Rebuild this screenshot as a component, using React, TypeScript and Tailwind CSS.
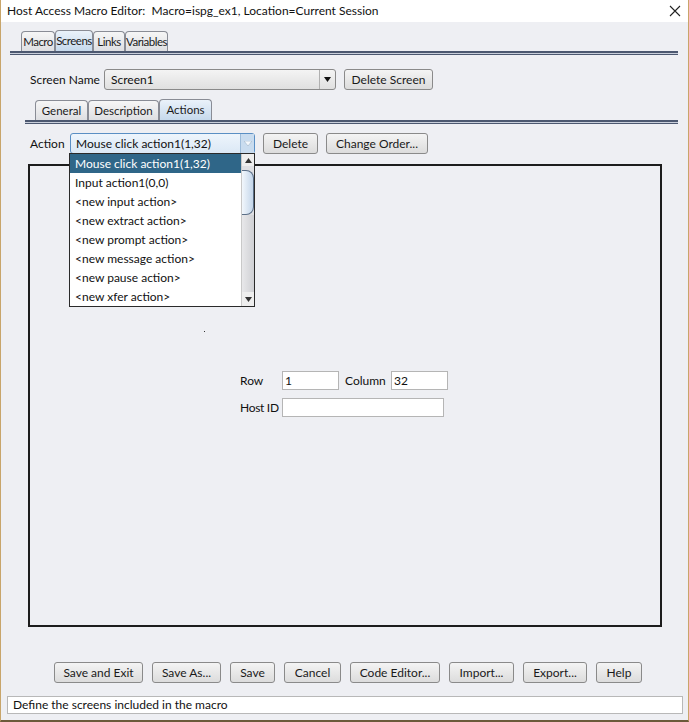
import React from 'react';

const font = { fontFamily: 'Lato, "Noto Sans", sans-serif' };

const Tab: React.FC<{ label: string; active?: boolean; w: number; small?: boolean }> = ({ label, active, w, small }) => (
  <div
    style={{ width: w }}
    className={`flex shrink-0 items-center justify-center whitespace-nowrap rounded-t-[4px] border border-b-0 border-[#898c95] text-[#1a1a1a] ${
      small ? 'text-[11.5px] tracking-[-0.5px]' : 'text-[11.5px]'
    } ${
      active
        ? 'h-[21px] bg-gradient-to-b from-[#eaf2fa] to-[#c6d9ec]'
        : 'h-[20px] bg-gradient-to-b from-[#f6f6f6] to-[#dedfe2]'
    }`}
  >
    {label}
  </div>
);

const Btn: React.FC<{ label: string; w: number }> = ({ label, w }) => (
  <div
    style={{ width: w }}
    className="flex h-[21px] shrink-0 items-center justify-center whitespace-nowrap rounded-[3px] border border-[#8a8a8a] bg-gradient-to-b from-[#f4f4f4] to-[#dcdcdc] text-[12px] text-[#1a1a1a]"
  >
    {label}
  </div>
);

const DoubleLine: React.FC = () => (
  <div className="h-[4px] border-t-2 border-b border-[#4c5870] bg-[#c9cfdb]" />
);

const items = [
  'Input action1(0,0)',
  '<new input action>',
  '<new extract action>',
  '<new prompt action>',
  '<new message action>',
  '<new pause action>',
  '<new xfer action>',
];

export default function App() {
  return (
    <div
      style={font}
      className="relative flex h-[722px] w-[689px] flex-col whitespace-nowrap border-x border-b-2 border-x-[#c8a56a] border-b-[#6b5a3a] bg-[#eeeff3] text-[#111]"
    >
      {/* title bar */}
      <div className="flex h-[22px] items-center justify-between bg-white pl-[6px] pr-[6px] text-[12px]">
        <span>Host Access Macro Editor:&nbsp; Macro=ispg_ex1, Location=Current Session</span>
        <svg width="12" height="12" viewBox="0 0 12 12" className="mr-[1px]">
          <path d="M1 1 L11 11 M11 1 L1 11" stroke="#222" strokeWidth="1.1" />
        </svg>
      </div>

      {/* top tabs */}
      <div className="pl-[9px] pr-[10px] pt-[8px]">
        <div className="flex items-end pl-[11px]">
          <Tab label="Macro" w={34} small />
          <Tab label="Screens" w={38} active small />
          <Tab label="Links" w={32} small />
          <Tab label="Variables" w={43} small />
        </div>
        <DoubleLine />
      </div>

      {/* screen name row */}
      <div className="mt-[14px] flex items-center pl-[29px] text-[12px]">
        <span className="w-[74px] shrink-0">Screen Name</span>
        <div className="flex h-[21px] w-[232px] shrink-0 items-center rounded-[3px] border border-[#8a8a8a] bg-gradient-to-b from-[#f4f4f4] to-[#e0e0e0]">
          <span className="flex-1 pl-[6px]">Screen1</span>
          <div className="flex h-full w-[16px] items-center justify-center border-l border-[#b0b0b0]">
            <svg width="7" height="5" viewBox="0 0 7 5">
              <path d="M0 0 H7 L3.5 5 Z" fill="#111" />
            </svg>
          </div>
        </div>
        <div className="ml-[8px]">
          <Btn label="Delete Screen" w={89} />
        </div>
      </div>

      {/* sub tabs */}
      <div className="mt-[9px] pl-[24px] pr-[10px]">
        <div className="flex items-end pl-[10px]">
          <Tab label="General" w={53} />
          <Tab label="Description" w={71} />
          <Tab label="Actions" w={53} active />
        </div>
        <DoubleLine />
      </div>

      {/* action row */}
      <div className="mt-[9px] flex items-center pl-[29px] text-[12px]">
        <span className="w-[40px] shrink-0">Action</span>
        <div className="flex h-[21px] w-[185px] shrink-0 items-center rounded-[3px] border border-[#5a8fc4] bg-gradient-to-b from-[#eef5fc] to-[#dbe8f5]">
          <span className="flex-1 pl-[5px]">Mouse click action1(1,32)</span>
          <div className="flex h-full w-[14px] items-center justify-center border-l border-[#9cbbd9] bg-[#c9dcef]">
            <svg width="8" height="5" viewBox="0 0 8 5">
              <path d="M0 0 H8 L4 5 Z" fill="#f4f8fc" stroke="#9fb3c8" strokeWidth="0.6" />
            </svg>
          </div>
        </div>
        <div className="ml-[8px]">
          <Btn label="Delete" w={55} />
        </div>
        <div className="ml-[8px]">
          <Btn label="Change Order..." w={102} />
        </div>
      </div>

      {/* main panel */}
      <div className="ml-[27px] mt-[10px] flex h-[463px] w-[634px] flex-col border-2 border-[#1c1c1c] text-[12px]">
        <div className="h-[165px]" />
        <div className="ml-[174px] h-[1px] w-[1px] bg-[#333]" />
        <div className="h-[39px]" />
        <div className="flex items-center pl-[210px]">
          <span className="w-[42px] shrink-0">Row</span>
          <div className="flex h-[19px] w-[57px] shrink-0 items-center border border-[#b5b5b5] bg-white pl-[2px]">1</div>
          <span className="ml-[6px] w-[46px] shrink-0">Column</span>
          <div className="flex h-[19px] w-[57px] shrink-0 items-center border border-[#b5b5b5] bg-white pl-[2px]">32</div>
        </div>
        <div className="mt-[8px] flex items-center pl-[210px]">
          <span className="w-[42px] shrink-0 tracking-[-0.3px]">Host ID</span>
          <div className="h-[19px] w-[162px] shrink-0 border border-[#b5b5b5] bg-white" />
        </div>
      </div>

      {/* bottom buttons */}
      <div className="mt-[35px] flex gap-[9px] pl-[53px]">
        <Btn label="Save and Exit" w={89} />
        <Btn label="Save As..." w={69} />
        <Btn label="Save" w={45} />
        <Btn label="Cancel" w={57} />
        <Btn label="Code Editor..." w={90} />
        <Btn label="Import..." w={65} />
        <Btn label="Export..." w={64} />
        <Btn label="Help" w={46} />
      </div>

      {/* status bar */}
      <div className="ml-[6px] mt-[13px] flex h-[18px] w-[676px] items-center border border-[#b8b8b8] bg-white pl-[5px] text-[12px]">
        Define the screens included in the macro
      </div>

      {/* open dropdown list */}
      <div className="absolute left-[68px] top-[153px] flex h-[154px] w-[186px] border border-[#2a2a2a] bg-white text-[12px]">
        <div className="flex flex-1 flex-col">
          <div className="flex h-[19px] items-center bg-[#2f6688] pl-[5px] text-white">Mouse click action1(1,32)</div>
          {items.map((it) => (
            <div key={it} className="flex h-[19px] items-center pl-[5px]">
              {it}
            </div>
          ))}
        </div>
        <div className="flex w-[13px] flex-col border-l border-[#c9c9c9] bg-[#dedfe3]">
          <div className="flex h-[12px] items-center justify-center bg-[#eeeeee]">
            <svg width="7" height="5" viewBox="0 0 7 5">
              <path d="M0 5 H7 L3.5 0 Z" fill="#333" />
            </svg>
          </div>
          <div className="mt-[4px] h-[45px] rounded-r-[8px] border border-l-0 border-[#5a6e86] bg-gradient-to-r from-[#f2f7fc] to-[#c4d6ea]" />
          <div className="flex-1 bg-gradient-to-r from-[#e8e8ea] to-[#cfd0d4]" />
          <div className="flex h-[14px] items-center justify-center bg-[#eeeeee]">
            <svg width="7" height="5" viewBox="0 0 7 5">
              <path d="M0 0 H7 L3.5 5 Z" fill="#333" />
            </svg>
          </div>
        </div>
      </div>
    </div>
  );
}
